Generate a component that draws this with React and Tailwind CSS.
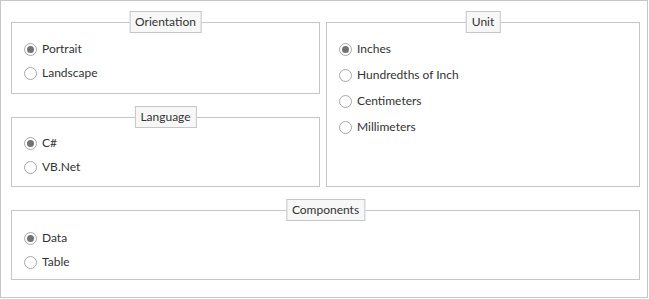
import React, { useState } from 'react'

const Radio = ({ label, checked, onClick, rowClass }) => (
    <div className={`flex items-center cursor-default ${rowClass}`} onClick={onClick}>
        <span className="w-[13px] h-[13px] rounded-full border border-[#a9a9a9] bg-white flex items-center justify-center shrink-0">
            {checked && <span className="w-[7px] h-[7px] rounded-full bg-[#737373]" />}
        </span>
        <span className="ml-[5px] text-[12px] text-[#333333] leading-none">{label}</span>
    </div>
);

const Group = ({ title, options, value, onChange, boxClass, listClass, rowClass }) => (
    <div className={`relative border border-[#c6c6c6] ${boxClass}`}>
        <div className="absolute left-1/2 -translate-x-1/2 -top-[12px] h-[22px] px-[5px] flex items-center border border-[#c6c6c6] bg-[#f7f7f7] text-[12px] text-[#333333] whitespace-nowrap">
            {title}
        </div>
        <div className={`flex flex-col pl-[12px] ${listClass}`}>
            {options.map(opt => (
                <Radio
                    key={opt}
                    label={opt}
                    checked={value === opt}
                    onClick={() => onChange(opt)}
                    rowClass={rowClass}
                />
            ))}
        </div>
    </div>
);

const App = () => {
    const [orientation, setOrientation] = useState('Portrait');
    const [language, setLanguage] = useState('C#');
    const [unit, setUnit] = useState('Inches');
    const [component, setComponent] = useState('Data');

    return (
        <div className="w-[649px] h-[299px] bg-white" style={{ fontFamily: 'Lato, "Noto Sans", sans-serif' }}>
            <div className="w-[648px] h-[298px] border border-[#c6c6c6] pt-[21px] pl-[10px] pr-[7px]">
                {/* Top row */}
                <div className="flex items-start gap-[6px]">
                    <div className="flex flex-col w-[309px]">
                        <Group
                            title="Orientation"
                            options={['Portrait', 'Landscape']}
                            value={orientation}
                            onChange={setOrientation}
                            boxClass="h-[72px]"
                            listClass="pt-[14px]"
                            rowClass="h-[24px]"
                        />
                        <div className="mt-[23px]">
                            <Group
                                title="Language"
                                options={['C#', 'VB.Net']}
                                value={language}
                                onChange={setLanguage}
                                boxClass="h-[70px]"
                                listClass="pt-[13px]"
                                rowClass="h-[24px]"
                            />
                        </div>
                    </div>
                    <div className="w-[314px]">
                        <Group
                            title="Unit"
                            options={['Inches', 'Hundredths of Inch', 'Centimeters', 'Millimeters']}
                            value={unit}
                            onChange={setUnit}
                            boxClass="h-[165px]"
                            listClass="pt-[13px]"
                            rowClass="h-[26px]"
                        />
                    </div>
                </div>

                {/* Components */}
                <div className="mt-[23px]">
                    <Group
                        title="Components"
                        options={['Data', 'Table']}
                        value={component}
                        onChange={setComponent}
                        boxClass="h-[70px]"
                        listClass="pt-[15px]"
                        rowClass="h-[24px]"
                    />
                </div>
            </div>
        </div>
    )
}

export default App;
